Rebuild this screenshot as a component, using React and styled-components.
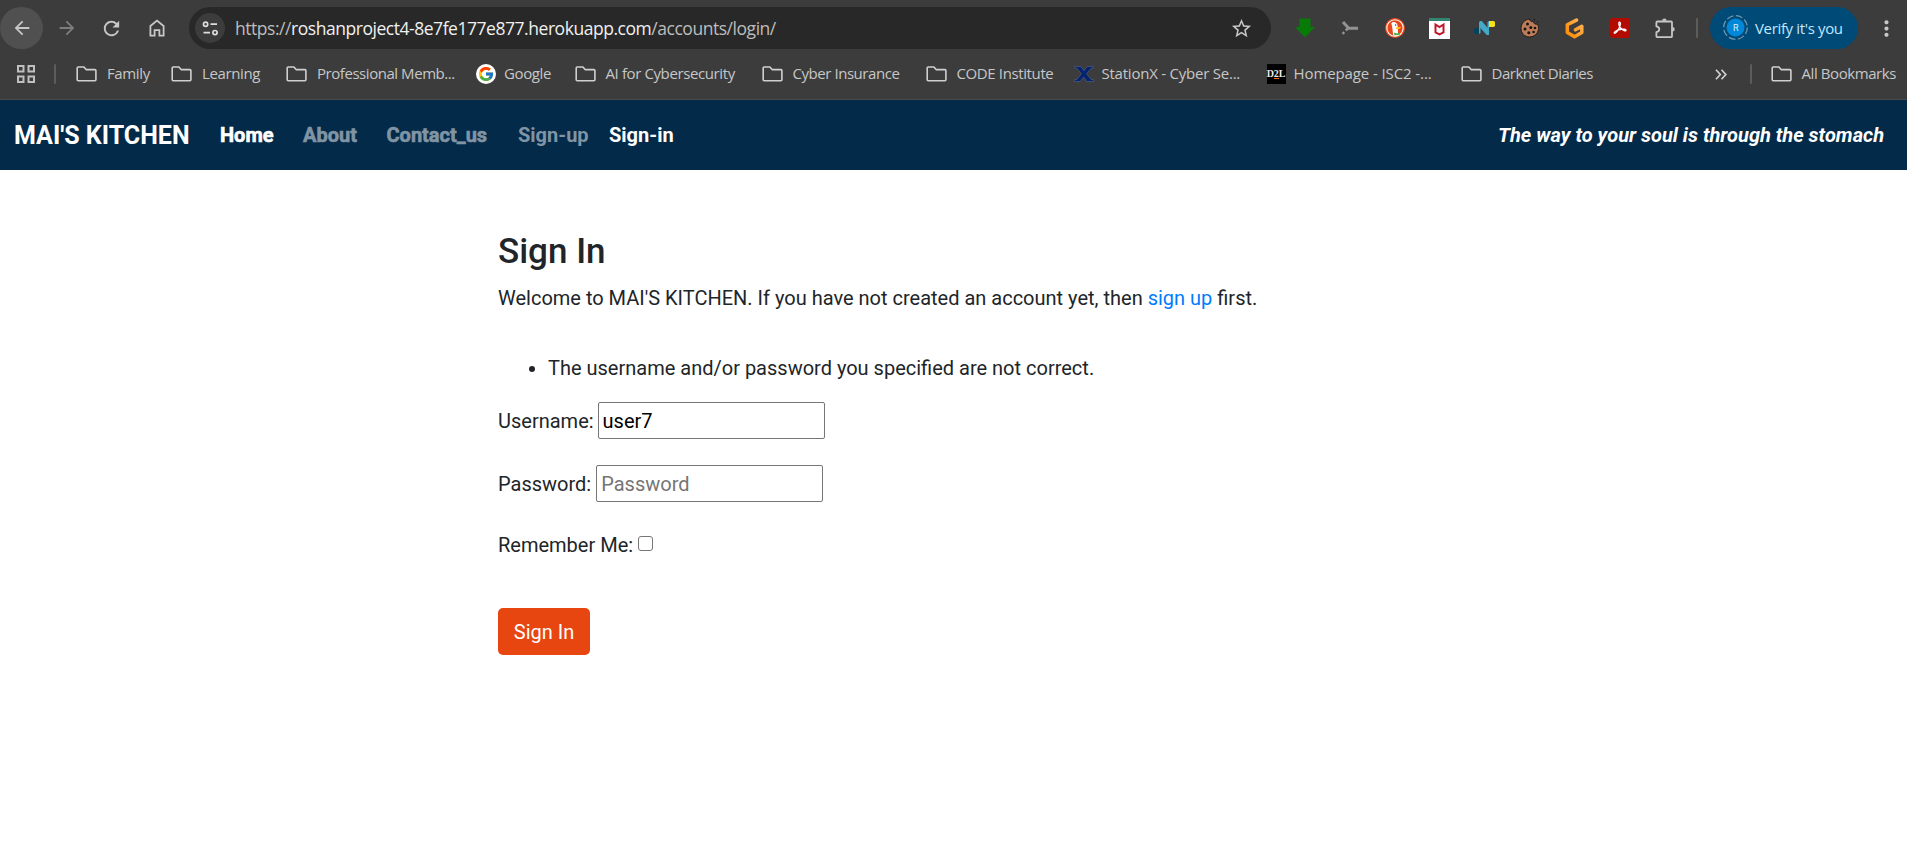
import React from "react";
import styled, { createGlobalStyle, css } from "styled-components";
import { FcGoogle } from "react-icons/fc";
import { MdArrowBack, MdArrowForward, MdRefresh, MdStarBorder, MdMoreVert } from "react-icons/md";

const GlobalStyle = createGlobalStyle`
  *, *::before, *::after { box-sizing: border-box; }
  body {
    margin: 0;
    background: #fff;
    color: #212529;
    font: 400 20px/30px Roboto, sans-serif;
  }
  svg { display: block; flex: none; }
`;

const Chrome = styled.div`
  height: 100px;
  background: #3c3c3c;
  border-bottom: 1px solid #4a4a4a;
  color: #c7c7c7;
  font-family: "Open Sans", "Noto Sans", sans-serif;
`;

const Toolbar = styled.div`
  display: flex;
  align-items: center;
  height: 50px;
  padding-top: 6px;
`;

const ToolButton = styled.button`
  display: flex;
  align-items: center;
  justify-content: center;
  width: 43px;
  height: 42px;
  margin-right: 2px;
  padding: 0;
  border: 0;
  border-radius: 21px;
  background: ${(p) => (p.$active ? "#505050" : "transparent")};
  color: ${(p) => (p.$dim ? "#7d7d7d" : "#c7c7c7")};
`;

const AddressBar = styled.div`
  display: flex;
  align-items: center;
  width: 1082px;
  height: 42px;
  margin-left: 9px;
  padding: 0 18px 0 6px;
  border-radius: 21px;
  background: #282828;
`;

const SiteInfo = styled.span`
  display: flex;
  align-items: center;
  justify-content: center;
  width: 30px;
  height: 30px;
  margin-right: 10px;
  border-radius: 50%;
  background: #3c3c3c;
`;

const Url = styled.span`
  flex: 1;
  padding-bottom: 1px;
  font-size: 17.5px;
  line-height: 24px;
  letter-spacing: -0.46px;
  white-space: nowrap;
  color: #bdbdbd;
`;

const Host = styled.span`
  color: #f0f0f0;
`;

const Extensions = styled.div`
  display: flex;
  margin-left: 11px;
`;

const ExtensionSlot = styled.span`
  display: flex;
  align-items: center;
  justify-content: center;
  width: 45px;
  height: 42px;
`;

const Separator = styled.span`
  flex: none;
  width: 2px;
  height: 20px;
  border-radius: 1px;
  background: #5c5c5c;
`;

const ToolbarSeparator = styled(Separator)`
  margin-left: 9px;
`;

const VerifyPill = styled.div`
  display: flex;
  align-items: center;
  width: 148px;
  height: 42px;
  margin-left: 12px;
  padding: 0 0 1px 13px;
  border-radius: 21px;
  background: #004a77;
  color: #c2e7ff;
  font-size: 15px;
  letter-spacing: -0.35px;
  white-space: nowrap;
`;

const Avatar = styled.span`
  display: flex;
  align-items: center;
  justify-content: center;
  width: 25px;
  height: 25px;
  margin-right: 7px;
`;

const MoreButton = styled.span`
  display: flex;
  margin-left: 16px;
`;

const BookmarksBar = styled.div`
  display: flex;
  align-items: center;
  height: 48px;
  padding-left: 17px;
`;

const Bookmark = styled.span`
  display: flex;
  align-items: center;
  flex: none;
  gap: ${(p) => p.$gap || 10}px;
  width: ${(p) => p.$width}px;
  font-size: 15px;
  line-height: 20px;
  letter-spacing: ${(p) => p.$spacing ?? -0.38}px;
  white-space: nowrap;
`;

const BookmarkLabel = styled.span`
  padding-bottom: 2px;
`;

const OverflowMark = styled.span`
  display: flex;
  width: 35px;
  margin-left: 122px;
`;

const Navbar = styled.nav`
  display: flex;
  align-items: center;
  height: 70px;
  padding: 0 23px 0 14px;
  background: #032a49;
  color: #fff;
`;

const Brand = styled.a`
  width: 206px;
  padding-top: 1px;
  font-size: 25px;
  font-weight: 700;
  white-space: nowrap;
`;

const NavLink = styled.a`
  width: ${(p) => p.$width}px;
  font-weight: 700;
  white-space: nowrap;
  ${(p) => p.$heavy && css`-webkit-text-stroke: 0.6px currentColor;`}
  ${(p) => p.$muted && css`color: #8194a4;`}
`;

const Tagline = styled.span`
  margin-left: auto;
  font-weight: 700;
  font-style: italic;
`;

const Main = styled.main`
  width: 912px;
  margin-left: 498px;
  padding-top: 61px;
`;

const Title = styled.h3`
  margin: 0 0 10px;
  font-size: 35px;
  font-weight: 500;
  line-height: 42px;
`;

const Intro = styled.p`
  margin: 0 0 40px;
`;

const TextLink = styled.a`
  color: #007bff;
  text-decoration: none;
`;

const Errors = styled.ul`
  margin: 0 0 19px;
  padding-left: 50px;
`;

const Field = styled.div`
  display: flex;
  align-items: center;
  gap: ${(p) => p.$gap || 5}px;
  height: ${(p) => p.$height || 37}px;
  margin-bottom: ${(p) => p.$after || 26}px;
`;

const TextInput = styled.input`
  width: 227px;
  height: 37px;
  padding: 1px 3px 1px 4px;
  border: 1px solid #767676;
  border-radius: 2px;
  outline: 0;
  background: #fff;
  color: #000;
  font: 400 20px/30px Roboto, sans-serif;
  &::placeholder { color: #757575; }
`;

const Checkbox = styled.input`
  appearance: none;
  width: 15px;
  height: 15px;
  margin: 0 0 4px;
  border: 1px solid #767676;
  border-radius: 3px;
  background: #fff;
`;

const SubmitButton = styled.button`
  width: 92px;
  height: 47px;
  padding: 0;
  border: 0;
  border-radius: 5px;
  background: #e84610;
  color: #fff;
  font: 400 20px/30px Roboto, sans-serif;
`;

const HomeIcon = () => (
  <svg width="16" height="18" viewBox="0 0 16 18" fill="none" stroke="currentColor" strokeWidth="1.8">
    <path d="M1.4 7 8 1.6 14.6 7v9.6h-4.200v-5.400H5.600v5.400H1.400z" />
  </svg>
);

const TuneIcon = () => (
  <svg width="17" height="15" viewBox="0 0 17 15" fill="none" stroke="#dedede" strokeWidth="1.7">
    <circle cx="3.6" cy="3.2" r="2.1" />
    <path d="M8.5 3.200H15M1.500 11.600H8" />
    <circle cx="13" cy="11.6" r="2.1" />
  </svg>
);

const FolderIcon = () => (
  <svg width="21" height="16" viewBox="0 0 21 16" fill="none" stroke="#d0d0d0" strokeWidth="1.6" strokeLinejoin="round">
    <path d="M2.2 1h5.700l2.200 2.600h8.800q1 0 1 1v9.200q0 1-1 1H2.200q-1 0-1-1V2q0-1 1-1z" />
  </svg>
);

const AppsIcon = () => (
  <svg width="18" height="18" viewBox="0 0 18 18" fill="none" stroke="#c0c0c0" strokeWidth="2">
    <path d="M1 1h5.500v5.500H1zM11.500 1H17v5.500h-5.500zM1 11.500h5.500V17H1zM11.500 11.500H17V17h-5.500z" />
  </svg>
);

const GoogleIcon = () => (
  <svg width="20" height="20" viewBox="0 0 20 20">
    <circle cx="10" cy="10" r="10" fill="#fff" />
    <FcGoogle x="1.5" y="1.5" size="17" />
  </svg>
);

const StationXIcon = () => (
  <svg width="20" height="16" viewBox="0 0 20 16" fill="#04246f" stroke="#5e6780" strokeWidth=".6">
    <path d="M.5.5H7l3 4.200L13.400.5h6v1.700h-2L12.500 7.700l4.700 5.800h2.300v2h-6.800L9.700 11l-3.500 4.500H.5v-2h2.200L7.400 7.800 2.800 2.200H.5z" />
  </svg>
);

const D2LBox = styled.span`
  display: flex;
  align-items: center;
  justify-content: center;
  width: 19px;
  height: 20px;
  background: linear-gradient(#e8641b, #e8641b) 7px 14px / 5px 1px no-repeat #000;
  color: #eee;
  font: 700 10px/20px "Liberation Serif", serif;
  letter-spacing: -0.2px;
`;

const DownloadIcon = () => (
  <svg width="20" height="20" viewBox="0 0 20 20">
    <path d="M4.500.5h11v8.500H20L10 19.500 0 9h4.500z" fill="#087a08" />
  </svg>
);

const ForkIcon = () => (
  <svg width="18" height="16" viewBox="0 0 18 16" fill="none" stroke="#929292">
    <path d="M2 2l5.500 6M7 8.200h10" strokeWidth="3" />
    <path d="M7 8.200L4.800 10.500M3.200 12.200L1.600 13.800" strokeWidth="2.600" />
  </svg>
);

const DuckIcon = () => (
  <svg width="20" height="20" viewBox="0 0 20 20">
    <circle cx="10" cy="10" r="10" fill="#e8481c" />
    <circle cx="10" cy="10" r="8.200" fill="#e8481c" stroke="#fff" strokeWidth="1.100" />
    <path d="M6.300 5.200c1.500-2 6-1.400 6.400 2.800l.4 9.200c-2 .8-3.700.6-4.900 0L7.200 9z" fill="#fff" />
    <path d="M11 9.500c2-.9 4-.7 5.200-.2-1 1.700-3.500 2-5.200 1.700z" fill="#fdc314" />
    <path d="M9 14.500l3 1 2.500-1v3l-2.500-.8-2.600.5z" fill="#42ad3f" />
    <circle cx="10.600" cy="7" r=".8" fill="#28506f" />
  </svg>
);

const McAfeeIcon = () => (
  <svg width="21" height="21" viewBox="0 0 21 21">
    <path d="M0 0h21v21H0z" fill="#fff" />
    <path d="M0 0h21v3H0z" fill="#32856f" />
    <path d="M6.500 6.500v8l4 2 4-2v-8l-4 2.600z" fill="none" stroke="#c01828" strokeWidth="2" />
  </svg>
);

const NIcon = () => (
  <svg width="21" height="16" viewBox="0 0 21 16">
    <path d="M0 9.500Q0 8 1.500 8H5v6H1.500Q0 14 0 12.500z" fill="#04435c" />
    <path d="M15 1h4.500Q21 1 21 2.500v2.800Q21 7 19.500 7H15z" fill="#f5e11c" />
    <path d="M5 2.500Q5 1 6.500 1h1.300l7.200 8.500V15h-2.300L5 6.500z" fill="#45a9c9" />
    <path d="M5 6l1.500 2v5L5 14zM13.500 2L15 1v9l-1.500-2z" fill="#45a9c9" />
  </svg>
);

const CookieIcon = () => (
  <svg width="20" height="20" viewBox="0 0 20 20">
    <path d="M9.500 1c.2 2 1.800 3 3.500 2.200 0 2 2.500 3.600 4.500 2.800 3 6-1 13-8 13C4.500 19 1 15 1 10.500 1 5.500 4.500 1.500 9.500 1z" fill="#bd7c58" stroke="#241d1a" strokeWidth="1" />
    <g fill="#181514">
      <circle cx="7.500" cy="6" r="1.500" />
      <circle cx="5" cy="11" r="1.500" />
      <circle cx="10.800" cy="9.500" r="1.500" />
      <circle cx="15" cy="10" r="1.300" />
      <circle cx="8.800" cy="14.700" r="1.500" />
      <circle cx="13.600" cy="14" r="1.300" />
      <circle cx="14.500" cy="1.700" r=".7" />
      <circle cx="17.800" cy="3.700" r=".6" />
    </g>
  </svg>
);

const HexIcon = () => (
  <svg width="19" height="21" viewBox="0 0 19 21" fill="none" strokeWidth="3.500" strokeLinejoin="round" strokeLinecap="round">
    <defs>
      <linearGradient id="hex" x1="0" y1="1" x2="1" y2="0">
        <stop offset="0" stopColor="#ff8a00" />
        <stop offset="1" stopColor="#ffb45b" />
      </linearGradient>
    </defs>
    <path d="M11.500 2.100L2.300 6.800v7.600l7.200 4.300 7.300-4.300V8.300l-6.300 3.500" stroke="url(#hex)" />
  </svg>
);

const AcrobatIcon = () => (
  <svg width="20" height="20" viewBox="0 0 20 20">
    <rect width="20" height="20" rx="3" fill="#b30b00" />
    <path d="M9.300 4.200c1.800-.4 1.100 3.700-.4 6.400-1.400 2.700-3.600 5.200-4.500 4.500-1.100-.9 2.300-3 5.500-3.600 3.600-.8 6.400-.2 6.200.9-.4 1.500-3.900-.3-5.900-3-1.500-2-1.800-5-.9-5.200z" fill="none" stroke="#fff" strokeWidth="1.300" />
  </svg>
);

const PuzzleIcon = () => (
  <svg width="22" height="21" viewBox="-1 0 22 21" fill="none" stroke="#c7c7c7" strokeWidth="1.800" strokeLinejoin="round">
    <path d="M2.400 3.500H16q1 0 1 1v13.700q0 1-1 1H2.400q-1 0-1-1v-4q2.900-.6 2.900-2.900T1.400 8.400V4.500q0-1 1-1z" />
    <path d="M7.200 2.800a2.200 2.200 0 0 1 4.400 0zM17.500 9a2.200 2.200 0 0 1 0 4.400z" fill="#c7c7c7" stroke="none" />
  </svg>
);

const AvatarIcon = () => (
  <svg width="25" height="25" viewBox="0 0 25 25">
    <circle cx="12.500" cy="12.500" r="11.800" fill="none" stroke="#6d97b0" strokeWidth="1.300" strokeDasharray="6.700 2.570" />
    <circle cx="12.500" cy="12.500" r="9" fill="#0288d8" />
    <text x="12.500" y="15.800" textAnchor="middle" fill="#dcf1ff" fontSize="9" fontFamily="Roboto">R</text>
  </svg>
);

const ChevronsIcon = () => (
  <svg width="12" height="11" viewBox="0 0 12 11" fill="none" stroke="#d0d0d0" strokeWidth="1.700">
    <path d="M1 .8l4.300 4.700L1 10.200M6.500.8l4.300 4.700-4.300 4.700" />
  </svg>
);

const extensionIcons = [DownloadIcon, ForkIcon, DuckIcon, McAfeeIcon, NIcon, CookieIcon, HexIcon, AcrobatIcon, PuzzleIcon];

const bookmarks = [
  { label: "Family", width: 95 },
  { label: "Learning", width: 115 },
  { label: "Professional Memb...", width: 190, spacing: -0.45 },
  { label: "Google", width: 98.5, icon: GoogleIcon, gap: 8 },
  { label: "AI for Cybersecurity", width: 187, spacing: -0.39 },
  { label: "Cyber Insurance", width: 164, spacing: -0.45 },
  { label: "CODE Institute", width: 148 },
  { label: "StationX - Cyber Se...", width: 193, icon: StationXIcon, gap: 8, spacing: -0.23 },
  { label: "Homepage - ISC2 -...", width: 194, icon: () => <D2LBox>D2L</D2LBox>, gap: 8, spacing: -0.1 },
  { label: "Darknet Diaries", width: 132, spacing: -0.48 },
];

function BrowserChrome() {
  return (
    <Chrome>
      <Toolbar>
        <ToolButton $active aria-label="Back"><MdArrowBack size={22} /></ToolButton>
        <ToolButton $dim aria-label="Forward"><MdArrowForward size={22} /></ToolButton>
        <ToolButton aria-label="Reload"><MdRefresh size={23} /></ToolButton>
        <ToolButton aria-label="Home"><HomeIcon /></ToolButton>
        <AddressBar>
          <SiteInfo><TuneIcon /></SiteInfo>
          <Url>https://<Host>roshanproject4-8e7fe177e877.herokuapp.com</Host>/accounts/login/</Url>
          <MdStarBorder size={23} />
        </AddressBar>
        <Extensions>
          {extensionIcons.map((Icon, i) => <ExtensionSlot key={i}><Icon /></ExtensionSlot>)}
        </Extensions>
        <ToolbarSeparator />
        <VerifyPill><Avatar><AvatarIcon /></Avatar>Verify it's you</VerifyPill>
        <MoreButton><MdMoreVert size={25} /></MoreButton>
      </Toolbar>
      <BookmarksBar>
        <Bookmark $width={37}><AppsIcon /></Bookmark>
        <Bookmark $width={22}><Separator /></Bookmark>
        {bookmarks.map(({ label, width, gap, spacing, icon: Icon = FolderIcon }) => (
          <Bookmark key={label} $width={width} $gap={gap} $spacing={spacing}>
            <Icon />
            <BookmarkLabel>{label}</BookmarkLabel>
          </Bookmark>
        ))}
        <OverflowMark><ChevronsIcon /></OverflowMark>
        <Bookmark $width={21}><Separator /></Bookmark>
        <Bookmark $width={130} $spacing={-0.42}><FolderIcon /><BookmarkLabel>All Bookmarks</BookmarkLabel></Bookmark>
      </BookmarksBar>
    </Chrome>
  );
}

export default function App() {
  return (
    <>
      <GlobalStyle />
      <BrowserChrome />
      <Navbar>
        <Brand>MAI'S KITCHEN</Brand>
        <NavLink $heavy $width={83}>Home</NavLink>
        <NavLink $heavy $muted $width={83.5}>About</NavLink>
        <NavLink $heavy $muted $width={131.5}>Contact_us</NavLink>
        <NavLink $muted $width={91}>Sign-up</NavLink>
        <NavLink $width={70}>Sign-in</NavLink>
        <Tagline>The way to your soul is through the stomach</Tagline>
      </Navbar>
      <Main>
        <Title>Sign In</Title>
        <Intro>
          Welcome to MAI'S KITCHEN. If you have not created an account yet, then <TextLink href="#">sign up</TextLink> first.
        </Intro>
        <Errors><li>The username and/or password you specified are not correct.</li></Errors>
        <Field $gap={4}>
          <label htmlFor="username">Username:</label>
          <TextInput id="username" defaultValue="user7" />
        </Field>
        <Field $after={27}>
          <label htmlFor="password">Password:</label>
          <TextInput id="password" type="password" placeholder="Password" />
        </Field>
        <Field $height={32} $after={47}>
          <label htmlFor="remember">Remember Me:</label>
          <Checkbox id="remember" type="checkbox" />
        </Field>
        <SubmitButton>Sign In</SubmitButton>
      </Main>
    </>
  );
}
